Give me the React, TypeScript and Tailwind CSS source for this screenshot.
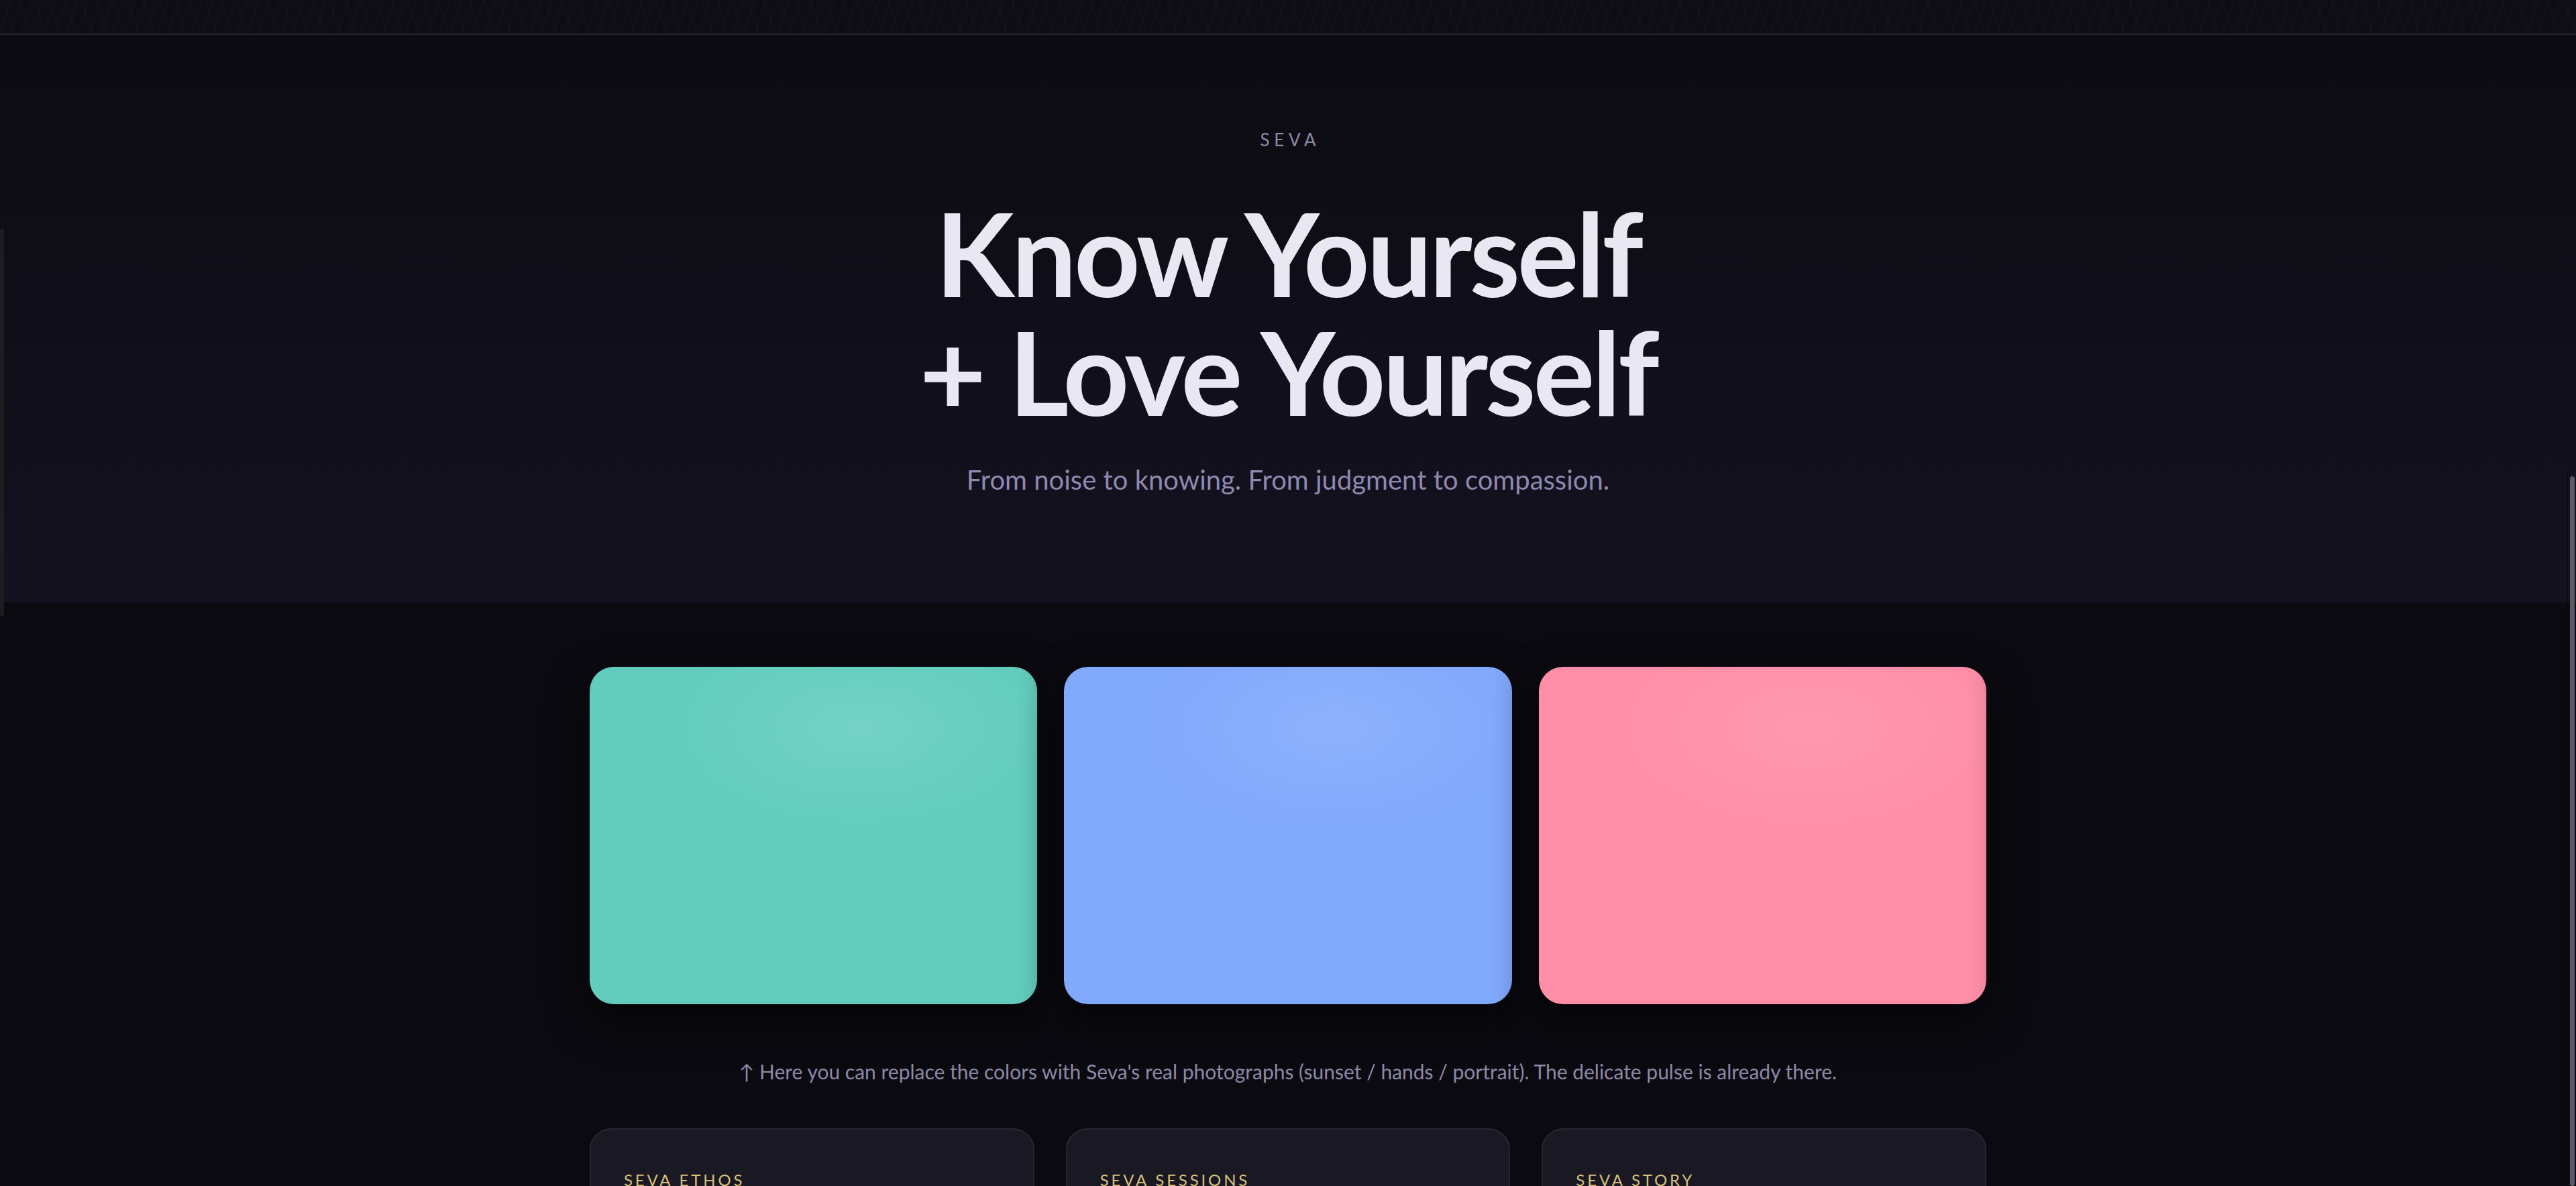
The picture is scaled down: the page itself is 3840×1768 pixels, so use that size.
import React from "react";

const photos = [
  { bg: "bg-[#63cdbd]" },
  { bg: "bg-[#81a9fc]" },
  { bg: "bg-[#ff8fa8]" },
];

const labels = ["SEVA ETHOS", "SEVA SESSIONS", "SEVA STORY"];

export default function App() {
  return (
    <div className="relative h-[1768px] overflow-hidden bg-[#0b0a10] font-['Lato','Noto_Sans',sans-serif]">
      <header className="h-[52px] border-b-2 border-[#262431] bg-[#0e0d14] bg-[repeating-linear-gradient(108deg,transparent_0px,transparent_13px,rgba(255,255,255,0.025)_14px,transparent_16px),repeating-linear-gradient(72deg,transparent_0px,transparent_19px,rgba(255,255,255,0.02)_20px,transparent_22px)]" />

      <section className="flex h-[846px] flex-col items-center bg-gradient-to-b from-[#0c0b13] to-[#14121f] pt-[137px]">
        <div className="pl-[0.26em] text-[26px] leading-[38px] tracking-[0.26em] text-[#8e8aa2]">SEVA</div>
        <h1 className="mt-[61px] text-center text-[172px] font-bold leading-[177px] tracking-[-0.024em] text-[#e9e7f2]">
          Know Yourself
          <br />+ Love Yourself
        </h1>
        <p className="mt-[43px] text-[40px] leading-[60px] text-[#8e89b0]">
          From noise to knowing. From judgment to compassion.
        </p>
      </section>

      <main className="mx-auto w-[2082px] pt-[96px]">
        <div className="grid grid-cols-3 gap-[40px]">
          {photos.map((p, i) => (
            <div
              key={i}
              className={`${p.bg} relative h-[503px] overflow-hidden rounded-[36px] shadow-[0_24px_60px_rgba(0,0,0,0.55)]`}
            >
              <div className="h-full w-full bg-[radial-gradient(ellipse_42%_30%_at_60%_18%,rgba(255,255,255,0.1),rgba(255,255,255,0.04)_60%,transparent_100%)] shadow-[inset_-22px_0_30px_-20px_rgba(0,0,0,0.12)]" />
            </div>
          ))}
        </div>

        <p className="mt-[78px] text-center text-[30px] leading-[44px] text-[#8d89a6]">
          ↑ Here you can replace the colors with Seva's real photographs (sunset / hands / portrait). The delicate pulse is already there.
        </p>

        <div className="mt-[63px] grid grid-cols-3 gap-[47px]">
          {labels.map((l) => (
            <div
              key={l}
              className="h-[300px] rounded-[32px] border-2 border-[#282632] bg-[#1a1822] px-[49px] pt-[57px]"
            >
              <div className="text-[24px] leading-[36px] tracking-[0.16em] text-[#d6c27a]">{l}</div>
            </div>
          ))}
        </div>
      </main>

      <div className="absolute left-0 top-[341px] h-[577px] w-[6px] bg-[#1d1d21]" />
      <div className="absolute right-[12px] top-[705px] bottom-0 w-px bg-[#08070c]" />
      <div className="absolute right-[2px] top-[710px] bottom-0 w-[7px] rounded-full bg-[#5b5967]" />
    </div>
  );
}
